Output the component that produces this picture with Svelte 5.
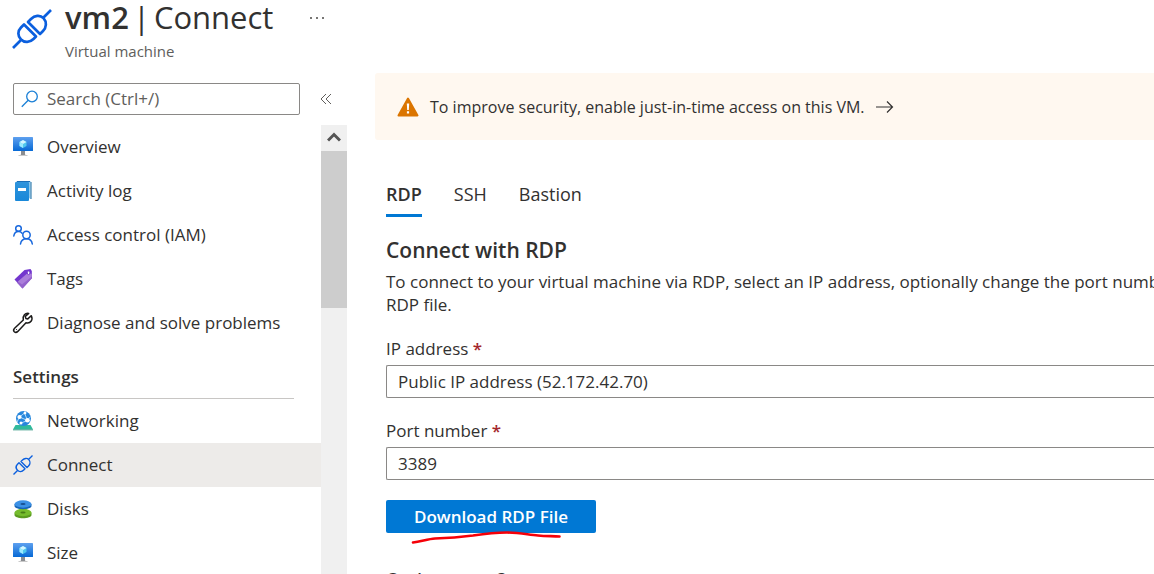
<script>
  const topItems = [
    ['vm', 'Overview'],
    ['log', 'Activity log'],
    ['iam', 'Access control (IAM)'],
    ['tag', 'Tags'],
    ['wrench', 'Diagnose and solve problems'],
  ];
  const settings = [
    ['net', 'Networking'],
    ['plug', 'Connect'],
    ['disk', 'Disks'],
    ['vm', 'Size'],
  ];
  const tabs = ['RDP', 'SSH', 'Bastion'];
  let selectedTab = $state('RDP');
  let current = $state('Connect');
  let port = $state('3389');
</script>

{#snippet plug(width)}
  <g fill="none" stroke="#0b5fde" stroke-width={width} stroke-linejoin="round">
    <path d="M1 39l8-8M31.500 8.500L39 1M12 15.500L24 27.500 21.500 30C18 33.500 12.500 34 9 30.500S5.500 22 9 18.500zM16 13L28 25l3-3c3.500-3.500 4-9 .5-12.800S22.500 6.500 19 10z" />
  </g>
{/snippet}

{#snippet icon(name)}
  <svg class="icon" viewBox={name === 'plug' ? '0 0 40 40' : '0 0 20 20'} aria-hidden="true">
    {#if name === 'vm'}
      <defs>
        <linearGradient id="screen" x1="0" y1="0" x2="0" y2="1"><stop offset="0" stop-color="#5ea0ef" /><stop offset="1" stop-color="#0669d5" /></linearGradient>
      </defs>
      <rect y="0" width="20" height="14" rx="0.6" fill="url(#screen)" />
      <path d="M8 14h4v3.500l1.500 1h-7l1.500-1z" fill="#8a8d91" />
      <path d="M5.500 18h9v1h-9z" fill="#c9c9c9" />
      <path d="M10 3l3.500 2v4L10 11 6.500 9V5z" fill="#50c8ee" />
      <path d="M10 3l3.500 2L10 7 6.500 5z" fill="#d5f6ff" />
      <path d="M6.500 5L10 7v4L6.500 9z" fill="#9cebff" />
    {:else if name === 'log'}
      <path d="M4 0h13l1.500 1.500V18H17z" fill="#8ac7ee" />
      <path d="M3.500 0H17v1H4z" fill="#1b6fb8" />
      <path d="M18 1v17" stroke="#5285a8" />
      <defs><linearGradient id="book" x1="0" y1="0" x2="0" y2="1"><stop offset="0" stop-color="#2f94dc" /><stop offset="1" stop-color="#1988d9" /></linearGradient></defs>
      <rect x="2" y="1" width="14" height="19" rx="1" fill="url(#book)" />
      <rect x="5" y="7" width="8" height="3" fill="#fff" />
    {:else if name === 'iam'}
      <g fill="none" stroke="#1767dd" stroke-width="1.500" stroke-linecap="round">
        <circle cx="5.500" cy="3.500" r="2.800" />
        <path d="M.8 11c.4-2.800 2-4.500 4.600-4.500 1.700 0 2.900.7 3.700 1.700" />
        <circle cx="13.500" cy="10" r="3.700" />
        <path d="M7.500 19c.5-3.300 2.800-5.200 6-5.200s5.300 1.900 5.800 5.200" />
      </g>
    {:else if name === 'tag'}
      <path d="M1.500 10.500L11.500.9 17.500 0l1.300 2v7L9.500 19.500z" fill="#7336ce" />
      <path d="M3.800 13.500L14.500 4l4.300 1V9.500L9.500 19.500z" fill="#9463cc" />
      <path d="M5 12.500L15 4l3.800 1v2.500L9 15.500z" fill="#ab7edb" />
      <ellipse cx="15.600" cy="3.800" rx="1.300" ry="1.800" fill="#fff" stroke="#7336ce" stroke-width="0.900" />
    {:else if name === 'wrench'}
      <path d="M18.200 2.700l-3.400 3.200-2-.5-.5-2 3.400-3C12.500-.3 9.200 2.500 10.300 7L1.600 15.200C.4 16.400.4 17.800 1.300 18.700c1 .9 2.400.8 3.500-.3L13 9.700c4.300 1 7.500-2.500 5.200-7z" fill="none" stroke="#1b1a19" stroke-width="1.500" stroke-linejoin="round" />
      <circle cx="3.500" cy="16.500" r=".6" fill="#1b1a19" />
    {:else if name === 'net'}
      <path d="M2.500 14h15l2.500 4.500H0z" fill="#2fba9b" />
      <path d="M0 18.500h20v.8H0z" fill="#258f7a" />
      <circle cx="10.500" cy="7.500" r="7.500" fill="#2786dc" />
      <g fill="none" stroke="#a9d8fa" stroke-width="1"><path d="M4 11L6.500 6l5-4M6.500 6l8 3.500M14.500 9.500L8 12M11.500 2l3 7.500M14.500 9.500l3-4" /></g>
      <g fill="#fff"><circle cx="6.500" cy="6" r="2.100" /><circle cx="14.500" cy="9.300" r="2.300" /><circle cx="12" cy="2" r="1.400" /><circle cx="8" cy="12" r="1.500" /></g>
    {:else if name === 'plug'}
      {@render plug(2.8)}
    {:else if name === 'disk'}
      <path d="M1.500 14v2c0 2 4 3.200 8.500 3.200s8.500-1.200 8.500-3.200v-2z" fill="#5b9b20" />
      <ellipse cx="10" cy="13.500" rx="8.500" ry="3.700" fill="#76bc2d" /><ellipse cx="10" cy="13.500" rx="2.600" ry=".9" fill="#477d16" />
      <path d="M1.500 5v2c0 2 4 3.200 8.500 3.200s8.500-1.200 8.500-3.200V5z" fill="#1664b7" />
      <ellipse cx="10" cy="5" rx="8.500" ry="3.700" fill="#3c91e5" /><ellipse cx="10" cy="5" rx="2.600" ry=".9" fill="#174f91" />
    {/if}
  </svg>
{/snippet}

{#snippet navList(items)}
  <ul>
    {#each items as [name, label]}
      <li>
        <a href="#{label}" class:current={current === label} aria-current={current === label ? 'page' : undefined} onclick={() => (current = label)}>
          {@render icon(name)}<span>{label}</span>
        </a>
      </li>
    {/each}
  </ul>
{/snippet}

<div class="page">
  <header>
    <svg class="logo" viewBox="0 0 40 40" aria-hidden="true">{@render plug(2.7)}</svg>
    <div class="title">
      <h1><b>vm2</b> <span>|</span> <span>Connect</span></h1>
      <p>Virtual machine</p>
    </div>
    <button class="more" aria-label="More actions">
      <svg width="18" height="4" viewBox="0 0 18 4"><g fill="#4a4846"><circle cx="3" cy="2" r="1" /><circle cx="9" cy="2" r="1" /><circle cx="15" cy="2" r="1" /></g></svg>
    </button>
  </header>

  <div class="body">
    <aside>
      <div class="search-row">
        <label class="search">
          <svg width="18" height="18" viewBox="0 0 18 18" aria-hidden="true"><g fill="none" stroke="#1a7fd6" stroke-width="1.300"><circle cx="11" cy="6.500" r="5.300" /><path d="M7.200 10.300L.8 16.700" /></g></svg>
          <input type="text" placeholder="Search (Ctrl+/)" aria-label="Search" />
        </label>
        <button class="collapse" aria-label="Collapse menu">
          <svg width="12" height="12" viewBox="0 0 12 12"><path d="M6 1L1 6l5 5M11 1L6 6l5 5" fill="none" stroke="#605e5c" /></svg>
        </button>
      </div>
      <div class="menu">
        <nav aria-label="Resource menu">
          {@render navList(topItems)}
          <h2>Settings</h2>
          {@render navList(settings)}
        </nav>
        <div class="scroll">
          <button aria-label="Scroll up"><svg width="14" height="12" viewBox="0 0 14 12"><path d="M1 8.500L7 2.500l6 6" fill="none" stroke="#555" stroke-width="3" /></svg></button>
          <div class="thumb"></div>
        </div>
      </div>
    </aside>

    <main>
      <a class="banner" href="#jit">
        <svg width="22" height="20" viewBox="0 0 22 20" aria-hidden="true"><path d="M11 1.500L20.500 18.500h-19z" fill="#db7500" stroke="#db7500" stroke-width="2" stroke-linejoin="round" /><path d="M9.800 6.500h2.400l-.4 6.500h-1.600zM9.900 14.200h2.200v2.200H9.900z" fill="#fff" /></svg>
        <span>To improve security, enable just-in-time access on this VM.</span>
        <svg width="18" height="14" viewBox="0 0 18 14" aria-hidden="true"><path d="M0 7h16M11 1.500L16.500 7 11 12.500" fill="none" stroke="#323130" stroke-width="1.200" /></svg>
      </a>
      <div class="content">
        <div class="tabs" role="tablist">
          {#each tabs as tab}
            <button role="tab" aria-selected={selectedTab === tab} onclick={() => (selectedTab = tab)}>{tab}</button>
          {/each}
        </div>
        <h3>Connect with RDP</h3>
        <p class="intro">To connect to your virtual machine via RDP, select an IP address, optionally change the port number,<br />RDP file.</p>
        <div class="field">
          <label for="ip">IP address <i>*</i></label>
          <select id="ip"><option>Public IP address (52.172.42.70)</option></select>
        </div>
        <div class="field">
          <label for="port">Port number <i>*</i></label>
          <input id="port" type="text" bind:value={port} />
        </div>
        <div class="action">
          <button class="primary">Download RDP File</button>
          <svg class="mark" width="152" height="14" viewBox="0 0 152 14" aria-hidden="true"><path d="M2 11.500C10 10.500 17 8 24 7.500 38 7 50 6 62 4.500 72 3 82 1.500 96 1.500c14 .2 22 2.500 31 3 8 .8 14 .5 21.500 1" fill="none" stroke="#f50008" stroke-width="2.600" stroke-linecap="round" /></svg>
        </div>
        <h4>Can't connect?</h4>
      </div>
    </main>
  </div>
</div>

<style>
  :global(body) { background: #fff; overflow: hidden; }
  .page { height: 100vh; overflow: hidden; display: flex; flex-direction: column; color: #323130; font-family: "Segoe UI", "Open Sans", sans-serif; font-size: 17px; line-height: 24px; }
  h1, h2, h3, h4, p, ul { margin: 0; padding: 0; }
  ul { list-style: none; }
  a { color: inherit; text-decoration: none; }
  button, input, select { font: inherit; color: inherit; box-sizing: border-box; margin: 0; }
  button { border: 0; background: none; padding: 0; cursor: pointer; }
  svg { display: block; flex: none; }
  header { display: flex; height: 73px; flex: none; padding-left: 12px; }
  .logo { width: 40px; height: 40px; margin-top: 9px; }
  .title { margin-left: 13px; }
  h1 { display: flex; gap: 4px; font-size: 31px; line-height: 34px; font-weight: 400; white-space: nowrap; }
  h1 b { font-weight: 600; }
  .title p { font-size: 15px; line-height: 20px; margin-top: 7px; color: #605e5c; }
  .more { height: 36px; margin-left: 35px; }
  .body { display: flex; flex: 1; min-height: 0; }
  aside { width: 347px; flex: none; display: flex; flex-direction: column; }
  .search-row { display: flex; align-items: center; height: 32px; padding: 10px 0 10px 13px; }
  .search { display: flex; align-items: center; box-sizing: border-box; width: 287px; height: 32px; border: 1px solid #8a8886; border-radius: 2px; padding-left: 7px; }
  .search input { border: 0; outline: 0; flex: 1; min-width: 0; padding: 0; margin-left: 8px; background: none; }
  .search input::placeholder { color: #605e5c; opacity: 1; }
  .collapse { margin-left: 20px; }
  .menu { display: flex; flex: 1; min-height: 0; }
  nav { flex: 1; overflow: hidden; }
  nav a { display: flex; align-items: center; height: 44px; padding-left: 13px; white-space: nowrap; }
  nav a.current { background: #edebe9; }
  .icon { width: 20px; height: 20px; margin-right: 14px; overflow: visible; }
  h2 { font-size: 17px; font-weight: 600; margin: 20px 27px 0 13px; height: 33px; border-bottom: 1px solid #c8c6c4; }
  .scroll { width: 26px; background: #f0f0f0; }
  .scroll button { display: flex; width: 26px; height: 26px; align-items: center; justify-content: center; }
  .thumb { height: 157px; background: #cdcdcd; }
  main { flex: 1; min-width: 0; margin-left: 28px; overflow: hidden; }
  .banner { display: flex; align-items: center; height: 67px; background: #fff8f0; border-radius: 3px 0 0 3px; padding-left: 22px; gap: 11px; font-size: 16px; white-space: nowrap; }
  .content { padding: 42px 0 0 11px; }
  .tabs { display: flex; gap: 32px; font-size: 18px; }
  .tabs button { height: 35px; padding-bottom: 8px; border-bottom: 3px solid transparent; }
  .tabs button[aria-selected="true"] { font-weight: 600; border-color: #0078d4; }
  h3 { font-size: 21px; line-height: 28px; font-weight: 600; margin-top: 19px; }
  .intro { line-height: 23px; margin-top: 6px; white-space: nowrap; }
  .field { display: flex; flex-direction: column; margin-top: 21px; }
  .field label { margin-bottom: 4px; }
  .field i { color: #a4262c; font-style: normal; font-weight: 600; }
  .field input, .field select { width: 100%; height: 33px; border: 1px solid #8a8886; border-right: 0; border-radius: 2px 0 0 2px; background: #fff; padding: 0 11px; appearance: none; }
  .action { position: relative; margin-top: 20px; }
  .primary { display: block; height: 33px; min-width: 210px; color: #fff; background: #0078d4; border-radius: 2px; font-weight: 600; }
  .mark { position: absolute; left: 25px; top: 31px; pointer-events: none; }
  h4 { font-size: 17px; font-weight: 600; margin-top: 34px; }
</style>
